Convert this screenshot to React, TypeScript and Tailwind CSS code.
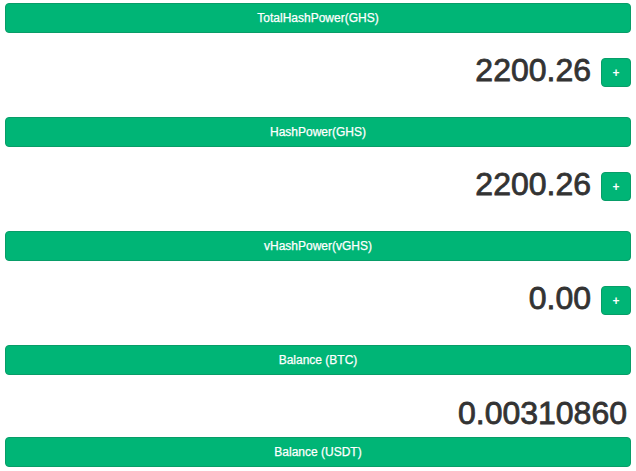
import React from 'react';

interface Stat {
  label: string;
  value: string;
  addable?: boolean;
}

const stats: Stat[] = [
  { label: 'TotalHashPower(GHS)', value: '2200.26', addable: true },
  { label: 'HashPower(GHS)', value: '2200.26', addable: true },
  { label: 'vHashPower(vGHS)', value: '0.00', addable: true },
  { label: 'Balance (BTC)', value: '0.00310860' },
];

const Bar: React.FC<{ label: string }> = ({ label }) => (
  <div className="h-[30px] rounded-[4px] border border-[#089d68] bg-[#00b576] flex items-center justify-center text-white text-[12px] [-webkit-text-stroke:0.25px_#ffffff]">
    {label}
  </div>
);

export default function App() {
  return (
    <div className="bg-white px-[5px] pt-[3px] font-['Liberation_Sans',Arial,sans-serif] text-[#333333]">
      {stats.map((s) => (
        <div key={s.label}>
          <Bar label={s.label} />
          {s.addable ? (
            <div className="h-[84px] flex justify-end items-start gap-[10px]">
              <span className="mt-[21px] text-[32px] leading-none [-webkit-text-stroke:0.8px_#333333]">{s.value}</span>
              {/* add button */}
              <button className="mt-[25px] w-[30px] h-[29px] rounded-[4px] border border-[#089d68] bg-[#00b576] text-white text-[12px] font-bold leading-none flex items-center justify-center">
                +
              </button>
            </div>
          ) : (
            <div className="h-[62px] flex justify-end items-start pr-[4px]">
              <span className="mt-[22px] text-[32px] leading-none [-webkit-text-stroke:0.8px_#333333]">{s.value}</span>
            </div>
          )}
        </div>
      ))}
      <Bar label="Balance (USDT)" />
    </div>
  );
}
